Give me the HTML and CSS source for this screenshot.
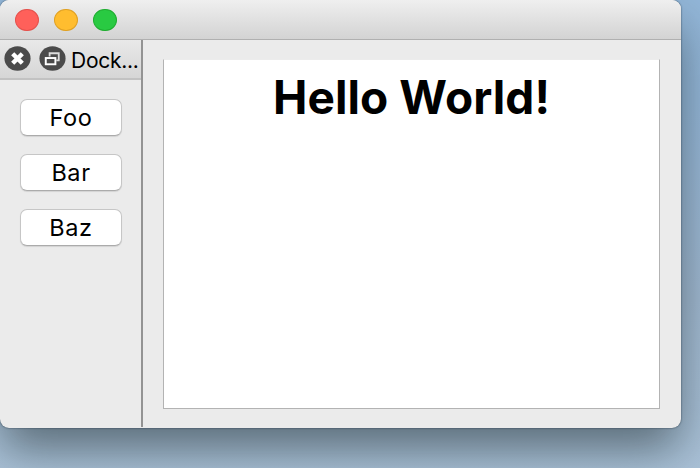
FILE: index.html
```html
<!DOCTYPE html>
<html lang="en">
<head>
<meta charset="utf-8">
<title>Hello World</title>
<link rel="stylesheet" href="styles.css">
</head>
<body>
<main class="window">
  <header class="titlebar">
    <span class="light red"></span>
    <span class="light yellow"></span>
    <span class="light green"></span>
  </header>
  <div class="content">
    <aside class="dock">
      <div class="dock-title">
        <svg class="icon" viewBox="0 0 28 26"><ellipse cx="14" cy="13" rx="13.6" ry="12.7" fill="#4b4b4b"/><path d="M9 8l10 10M19 8l-10 10" stroke="#fff" stroke-width="4.6"/></svg>
        <svg class="icon" viewBox="0 0 28 26"><ellipse cx="14" cy="13" rx="13.6" ry="12.7" fill="#4b4b4b"/><path d="M11 11V7.500h9.500V15H18" fill="none" stroke="#ddd" stroke-width="1.9"/><rect x="7" y="12.500" width="10" height="6.500" fill="#4b4b4b" stroke="#fff" stroke-width="2"/></svg>
        <span class="dock-label">Dock...</span>
      </div>
      <div class="buttons">
        <button>Foo</button>
        <button>Bar</button>
        <button>Baz</button>
      </div>
    </aside>
    <section class="central">
      <div class="editor"><h1>Hello World!</h1></div>
    </section>
  </div>
</main>
</body>
</html>
```
FILE: styles.css
```css
* { box-sizing: border-box; }
body {
  margin: 0;
  height: 468px;
  overflow: hidden;
  font-family: Inter, "Liberation Sans", sans-serif;
  color: #000;
  background: linear-gradient(#92b6d8 0, #93b5d6 100px, #a0b8d0 300px, #aac2d8 468px);
}
.window {
  display: flex;
  flex-direction: column;
  width: 681px;
  height: 428px;
  border-radius: 9px;
  background: #ebebeb;
  box-shadow: 0 0 2px rgba(30, 50, 65, .9), 0 24px 46px -3px rgba(5, 15, 15, .47);
}
.titlebar {
  display: flex;
  align-items: center;
  gap: 15px;
  height: 40px;
  padding: 1px 0 0 15px;
  border-bottom: 1px solid #b0b0b0;
  border-radius: 9px 9px 0 0;
  background: linear-gradient(#efefef, #d3d3d3);
}
.light { width: 24px; height: 22.500px; border: 1px solid; border-radius: 50%; }
.red { background: #ff605a; border-color: #e4514c; }
.yellow { background: #ffbd2f; border-color: #dfa023; }
.green { background: #29ca42; border-color: #1fad30; }
.content { display: flex; flex: 1; min-height: 0; }
.dock { width: 143px; height: 387px; border-right: 2px solid #939393; }
.dock-title {
  display: flex;
  align-items: center;
  height: 40px;
  padding: 0 0 1px 4px;
  border-bottom: 2px solid #c2c2c2;
  background: linear-gradient(#e9e9e9, #d6d6d6);
}
.icon { flex: none; width: 27px; height: 25px; margin-right: 8px; }
.dock-label { margin: 4px 0 0 -3px; font-size: 21px; letter-spacing: -.25px; white-space: nowrap; }
.buttons { display: flex; flex-direction: column; gap: 18px; padding: 19px 19px 0 20px; }
button {
  height: 37px;
  padding: 0;
  border: 1px solid #c6c6c6;
  border-bottom-color: #ababab;
  border-radius: 7px;
  background: #fff;
  box-shadow: 0 1px 1px rgba(0, 0, 0, .1);
  color: #000;
  font: 23.500px Inter, "Liberation Sans", sans-serif;
  letter-spacing: .6px;
}
.central { flex: 1; padding: 19px 21px 19px 20px; }
.editor { height: 350px; border: 1px solid #b3b3b3; border-top-color: #ececec; background: #fff; }
h1 {
  margin: 9px 0 0;
  font-size: 46px;
  font-weight: 700;
  line-height: 56px;
  letter-spacing: .1px;
  text-align: center;
}
```
